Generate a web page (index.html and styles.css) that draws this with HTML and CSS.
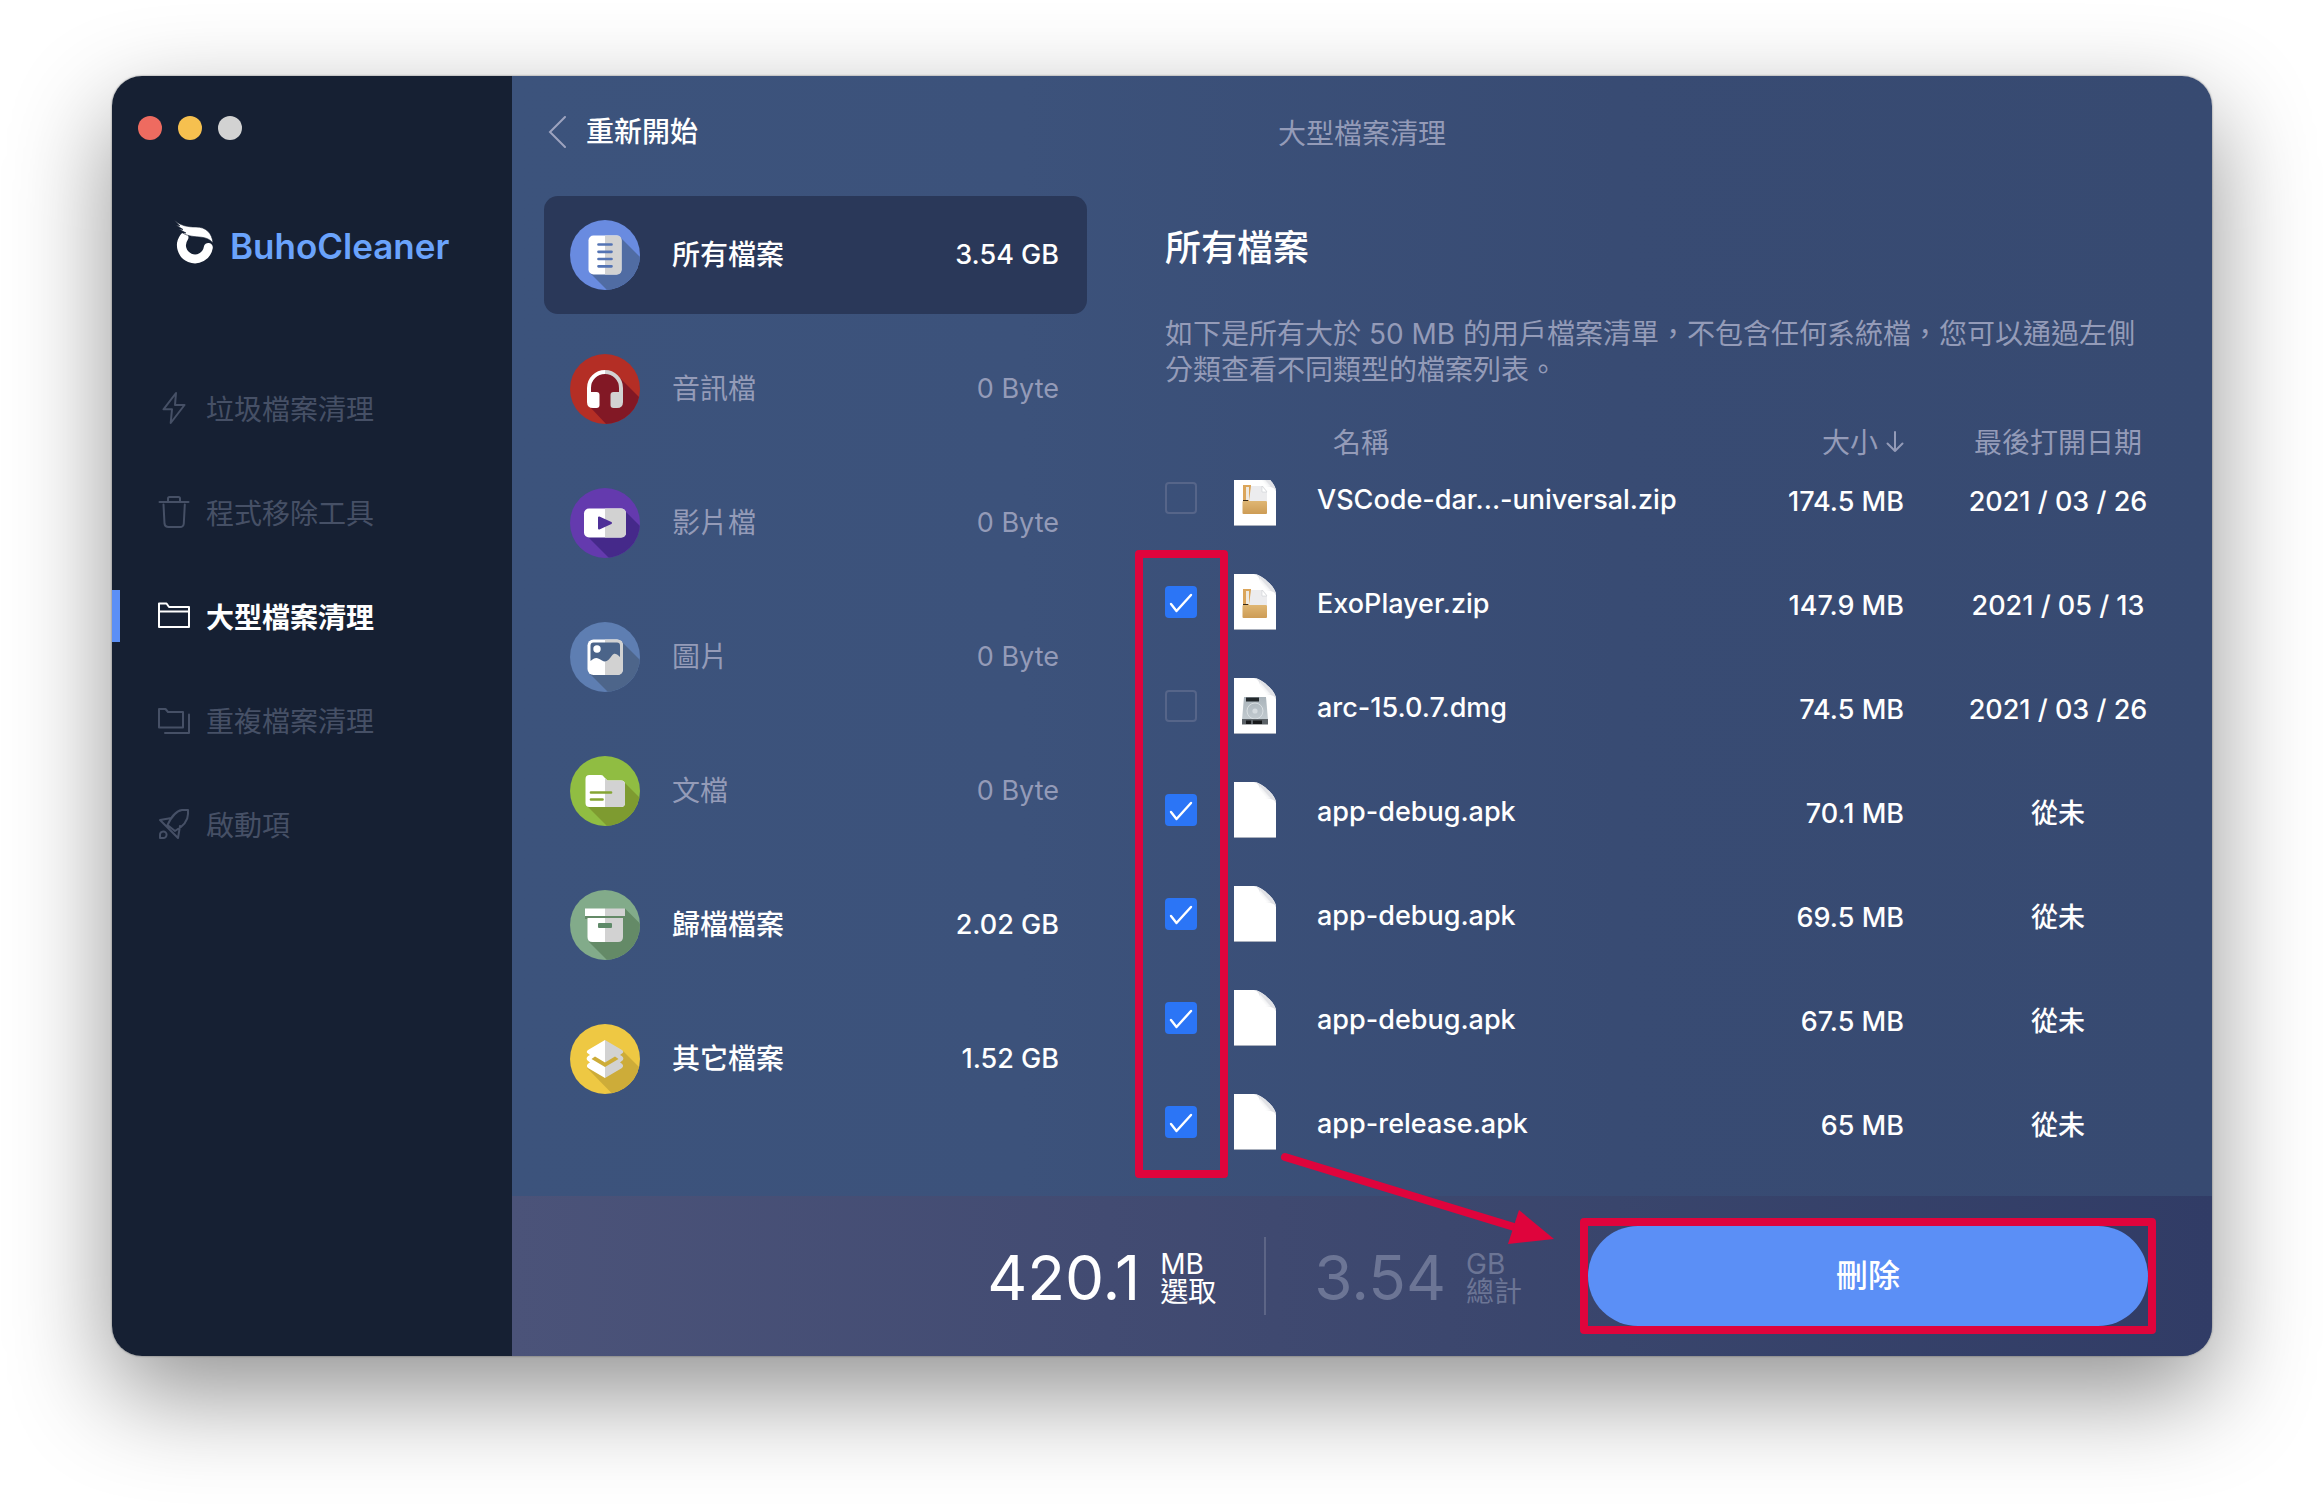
FILE: index.html
```html
<!DOCTYPE html>
<html lang="zh-Hant">
<head>
  <meta charset="UTF-8" />
  <meta name="viewport" content="width=device-width, initial-scale=1.0"/>
  <title>BuhoCleaner - 大型檔案清理</title>
  <link rel="stylesheet" href="styles.css">
</head>
<body>

  <!-- File icons shared by the table rows -->
  <svg class="defs" width="0" height="0" aria-hidden="true">
    <defs>
      <linearGradient id="fold" x1="0" y1="1" x2="1" y2="0">
        <stop offset="0.3" stop-color="#fff"/>
        <stop offset="1" stop-color="#c9ccd2"/>
      </linearGradient>
      <linearGradient id="kraft" x1="0" y1="0" x2="0" y2="1">
        <stop offset="0" stop-color="#dfb673"/>
        <stop offset="1" stop-color="#cd9c55"/>
      </linearGradient>
      <linearGradient id="metal" x1="0" y1="0" x2="0" y2="1">
        <stop offset="0" stop-color="#a9b3ba"/>
        <stop offset="1" stop-color="#c3cbd0"/>
      </linearGradient>
      <clipPath id="disc"><circle cx="35" cy="35" r="35"/></clipPath>
      <symbol id="page" viewBox="0 0 42 56">
        <path d="M0 0H20C27 0 42 13 42 21V56H0Z" fill="#fff"/>
        <path d="M20 0C27 0 42 13 42 21C40 17 36 16 26.500 16C27 8 26 2 20 0Z" fill="#e1e2e6"/>
        <path d="M26 4V16.500H37Z" fill="url(#fold)"/>
        <path d="M0 55.500H42" stroke="#aab0bd"/>
      </symbol>
      <symbol id="zip" viewBox="0 0 42 56">
        <use href="#page"/>
        <path d="M9 15H17V31H9Z" fill="#dba55a"/>
        <path d="M12 17H15V30H12Z" fill="#efe9df"/>
        <path d="M17 16H29L33 21V31H15Z" fill="#ececee"/>
        <path d="M28 16V22H33Z" fill="#fff" stroke="#cfd0d4" stroke-width="0.600"/>
        <path d="M9 30H14V31.500H9Z" fill="#3a2b18"/>
        <rect x="8.500" y="31" width="24.500" height="13" rx="1" fill="url(#kraft)"/>
      </symbol>
      <symbol id="dmg" viewBox="0 0 42 56">
        <use href="#page"/>
        <path d="M10 19H32L34 42H8Z" fill="url(#metal)"/>
        <rect x="12" y="19.500" width="13" height="4" fill="#23282c"/>
        <circle cx="21" cy="33" r="8" fill="none" stroke="#dfe4e7" stroke-width="0.800"/>
        <circle cx="21" cy="33" r="2.600" fill="#d5dbdf"/>
        <path d="M8 41H34V46.500H8Z" fill="#5c6267"/>
        <path d="M12 42.500H17V46H12ZM19 42.500H28V46H19Z" fill="#17191b"/>
      </symbol>
    </defs>
  </svg>

  <div class="window">
    <aside class="sidebar">
      <div class="lights">
        <span class="light red"></span>
        <span class="light yellow"></span>
        <span class="light gray"></span>
      </div>

      <div class="brand">
        <svg class="brand-mark" viewBox="0 0 40 44" aria-hidden="true">
          <path d="M10 17.500A13.500 13.500 0 1 0 34.300 27.500" fill="none" stroke="#fff" stroke-width="9" stroke-linecap="round"/>
          <path d="M0 0C7 6 14 7 22 7C32 7 38 13 39 23C35 18.500 31 17.500 25 17C18 16.500 12 15.500 9 13L12 13L5 9L9 9.500L2 5L6 6Z" fill="#fff" stroke="#162033" stroke-width="0.600"/>
        </svg>
        <span class="brand-name">BuhoCleaner</span>
      </div>

      <nav class="menu">
        <a href="#junk" class="menu-item">
          <svg class="menu-icon" viewBox="0 0 32 32"><path d="M18 1L5.500 17.300H14L12.700 31L26.500 13H17Z"/></svg>
          <span class="menu-text">垃圾檔案清理</span>
        </a>
        <a href="#uninstall" class="menu-item">
          <svg class="menu-icon" viewBox="0 0 32 32"><path d="M1.500 6H30.500M10 6V2.500Q10 1 11.500 1H20.500Q22 1 22 2.500V6M5.500 8.500L6.500 27.500Q7 31 10.500 31H22Q25.500 31 25.800 27.500L26.800 8.500"/></svg>
          <span class="menu-text">程式移除工具</span>
        </a>
        <a href="#large" class="menu-item active">
          <svg class="menu-icon" viewBox="0 0 32 32"><path d="M1 27V3.500H8.500L11 7H31V27ZM1 11.500H31"/></svg>
          <span class="menu-text">大型檔案清理</span>
        </a>
        <a href="#duplicate" class="menu-item">
          <svg class="menu-icon" viewBox="0 0 32 32"><path d="M1 23.500V5H7.500L10 8H25V23.500ZM31 10.500V29H7"/></svg>
          <span class="menu-text">重複檔案清理</span>
        </a>
        <a href="#startup" class="menu-item">
          <svg class="menu-icon" viewBox="0 0 32 32"><path d="M30 2H24C17 3 13 10 9.500 17L17 23C24 19 30 13 30 6ZM13.500 10L2 12L20 30L22 18M2 30V27A3.300 3.300 0 1 1 5 30Z"/></svg>
          <span class="menu-text">啟動項</span>
        </a>
      </nav>
    </aside>

    <main class="main">
      <header class="topbar">
        <a href="#restart" class="back">
          <svg class="back-icon" viewBox="0 0 18 32"><path d="M17 1L2 16L17 31"/></svg>
          重新開始
        </a>
        <h1 class="title">大型檔案清理</h1>
      </header>

      <div class="content">
        <div class="categories">
          <button type="button" class="category selected">
            <svg class="category-icon" viewBox="0 0 70 70">
              <g clip-path="url(#disc)">
                <rect width="70" height="70" fill="#698be0"/>
                <path d="M50 17L90 57V90H57L20 53Z" fill="#506ca3"/>
              </g>
              <rect x="18.500" y="15.500" width="33" height="39" rx="5" fill="#fff"/>
              <path d="M35 15.500H46.500Q51.500 15.500 51.500 20.500V49.500Q51.500 54.500 46.500 54.500H35Z" fill="#d2d2d2"/>
              <path d="M28.500 24.500H41.500M28.500 31.800H41.500M28.500 39H41.500M28.500 46.300H41.500" stroke="#5474b4" stroke-width="2.700" stroke-linecap="round"/>
            </svg>
            <span class="category-name">所有檔案</span>
            <span class="category-size">3.54 GB</span>
          </button>

          <button type="button" class="category empty">
            <svg class="category-icon" viewBox="0 0 70 70">
              <g clip-path="url(#disc)">
                <rect width="70" height="70" fill="#b42e25"/>
                <path d="M48 22L90 64V90H55L20 53V35Q22 18 35 18Z" fill="#821825"/>
              </g>
              <path d="M19 40V34A16 16 0 0 1 35 18" fill="none" stroke="#fff" stroke-width="4"/>
              <path d="M35 18A16 16 0 0 1 51 34V40" fill="none" stroke="#d2d2d2" stroke-width="4"/>
              <path d="M17 38H26.500Q29.500 38 29.500 41V51Q29.500 54 26.500 54H23Q17 54 17 48Z" fill="#fff"/>
              <path d="M53 38H43.500Q40.500 38 40.500 41V51Q40.500 54 43.500 54H47Q53 54 53 48Z" fill="#d2d2d2"/>
            </svg>
            <span class="category-name">音訊檔</span>
            <span class="category-size">0 Byte</span>
          </button>

          <button type="button" class="category empty">
            <svg class="category-icon" viewBox="0 0 70 70">
              <g clip-path="url(#disc)">
                <rect width="70" height="70" fill="#643aae"/>
                <path d="M54 22L90 58V90H59L17 48Z" fill="#45298a"/>
              </g>
              <rect x="14" y="20.500" width="42" height="29" rx="5" fill="#fff"/>
              <path d="M35 20.500H51Q56 20.500 56 25.500V44.500Q56 49.500 51 49.500H35Z" fill="#d2d2d2"/>
              <path d="M29 29.500V40.500L41 35Z" fill="#4e2f98" stroke="#4e2f98" stroke-width="2" stroke-linejoin="round"/>
            </svg>
            <span class="category-name">影片檔</span>
            <span class="category-size">0 Byte</span>
          </button>

          <button type="button" class="category empty">
            <svg class="category-icon" viewBox="0 0 70 70">
              <g clip-path="url(#disc)">
                <rect width="70" height="70" fill="#5e7eb2"/>
                <path d="M52 20L90 58V90H58L20 52Z" fill="#4d658a"/>
              </g>
              <rect x="17.500" y="17.500" width="35.500" height="35.500" rx="6" fill="#fff"/>
              <path d="M35 17.500H47Q53 17.500 53 23.500V47Q53 53 47 53H35Z" fill="#d2d2d2"/>
              <path d="M20.500 39V23.500Q20.500 20.500 23.500 20.500H47Q50 20.500 50 23.500V35C46 31 44 31 42 33.500C39 38 36 41 32 38.500C27 35 25 35 20.500 39Z" fill="#4b6489"/>
              <circle cx="27" cy="27" r="3.700" fill="#fff"/>
            </svg>
            <span class="category-name">圖片</span>
            <span class="category-size">0 Byte</span>
          </button>

          <button type="button" class="category empty">
            <svg class="category-icon" viewBox="0 0 70 70">
              <g clip-path="url(#disc)">
                <rect width="70" height="70" fill="#90bd42"/>
                <path d="M54 26L90 62V90H57L17 50Z" fill="#7e9b30"/>
              </g>
              <path d="M15.500 23Q15.500 19 19.500 19H31Q33 19 34 21L37.500 24.500H51Q55 24.500 55 28.500V47Q55 51 51 51H19.500Q15.500 51 15.500 47Z" fill="#fff"/>
              <path d="M35 22L37.500 24.500H51Q55 24.500 55 28.500V47Q55 51 51 51H35Z" fill="#d2d2d2"/>
              <path d="M21 36.500H41M21 43.500H32.500" stroke="#85a534" stroke-width="2.700" stroke-linecap="round"/>
            </svg>
            <span class="category-name">文檔</span>
            <span class="category-size">0 Byte</span>
          </button>

          <button type="button" class="category">
            <svg class="category-icon" viewBox="0 0 70 70">
              <g clip-path="url(#disc)">
                <rect width="70" height="70" fill="#82ab8a"/>
                <path d="M55 18.500L90 53.500V90H57L19 52Z" fill="#648a67"/>
              </g>
              <path d="M15 26H55V29H15Z" fill="#648a67"/>
              <path d="M15 18.500H35V26H15ZM17.500 28H35V52H22.500Q17.500 52 17.500 47Z" fill="#fff"/>
              <path d="M35 18.500H55V26H35ZM35 28H53V47Q53 52 48 52H35Z" fill="#d2d2d2"/>
              <rect x="28" y="33" width="14" height="5" rx="1" fill="#5f8a69"/>
            </svg>
            <span class="category-name">歸檔檔案</span>
            <span class="category-size">2.02 GB</span>
          </button>

          <button type="button" class="category">
            <svg class="category-icon" viewBox="0 0 70 70">
              <g clip-path="url(#disc)">
                <rect width="70" height="70" fill="#eec843"/>
                <path d="M53 27L90 64V90H62L17 44Z" fill="#cdac39"/>
              </g>
              <path d="M35 16L18 26Q15.500 28 18 29.500L20 31Q15.500 33 17 36L20 38.500Q15 41 18 44L35 54Z" fill="#fff"/>
              <path d="M35 16L52 26Q54.500 28 52 29.500L50 31Q54.500 33 53 36L50 38.500Q55 41 52 44L35 54Z" fill="#d2d2d2"/>
              <path d="M21.500 35L25 32.500L35 38.500L45 32.500L48.500 35L35 43Z" fill="#cdac39"/>
            </svg>
            <span class="category-name">其它檔案</span>
            <span class="category-size">1.52 GB</span>
          </button>
        </div>

        <section class="files">
          <h2 class="files-title">所有檔案</h2>
          <p class="files-desc">如下是所有大於 50 MB 的用戶檔案清單，不包含任何系統檔，您可以通過左側分類查看不同類型的檔案列表。</p>

          <div class="table-wrap">
            <table class="table">
              <thead>
                <tr>
                  <th></th>
                  <th></th>
                  <th class="col-name">名稱</th>
                  <th class="col-size">大小
                    <svg class="sort-icon" viewBox="0 0 18 22"><path d="M9 1V20M1.500 12.500L9 20L16.500 12.500"/></svg>
                  </th>
                  <th class="col-date">最後打開日期</th>
                </tr>
              </thead>
              <tbody>
                <tr>
                  <td><input type="checkbox" class="check" aria-label="VSCode-dar...-universal.zip"></td>
                  <td><svg class="file-icon"><use href="#zip"/></svg></td>
                  <td class="col-name">VSCode-dar...-universal.zip</td>
                  <td class="col-size">174.5 MB</td>
                  <td class="col-date">2021 / 03 / 26</td>
                </tr>
                <tr>
                  <td><input type="checkbox" class="check" aria-label="ExoPlayer.zip" checked></td>
                  <td><svg class="file-icon"><use href="#zip"/></svg></td>
                  <td class="col-name">ExoPlayer.zip</td>
                  <td class="col-size">147.9 MB</td>
                  <td class="col-date">2021 / 05 / 13</td>
                </tr>
                <tr>
                  <td><input type="checkbox" class="check" aria-label="arc-15.0.7.dmg"></td>
                  <td><svg class="file-icon"><use href="#dmg"/></svg></td>
                  <td class="col-name">arc-15.0.7.dmg</td>
                  <td class="col-size">74.5 MB</td>
                  <td class="col-date">2021 / 03 / 26</td>
                </tr>
                <tr>
                  <td><input type="checkbox" class="check" aria-label="app-debug.apk" checked></td>
                  <td><svg class="file-icon"><use href="#page"/></svg></td>
                  <td class="col-name">app-debug.apk</td>
                  <td class="col-size">70.1 MB</td>
                  <td class="col-date">從未</td>
                </tr>
                <tr>
                  <td><input type="checkbox" class="check" aria-label="app-debug.apk" checked></td>
                  <td><svg class="file-icon"><use href="#page"/></svg></td>
                  <td class="col-name">app-debug.apk</td>
                  <td class="col-size">69.5 MB</td>
                  <td class="col-date">從未</td>
                </tr>
                <tr>
                  <td><input type="checkbox" class="check" aria-label="app-debug.apk" checked></td>
                  <td><svg class="file-icon"><use href="#page"/></svg></td>
                  <td class="col-name">app-debug.apk</td>
                  <td class="col-size">67.5 MB</td>
                  <td class="col-date">從未</td>
                </tr>
                <tr>
                  <td><input type="checkbox" class="check" aria-label="app-release.apk" checked></td>
                  <td><svg class="file-icon"><use href="#page"/></svg></td>
                  <td class="col-name">app-release.apk</td>
                  <td class="col-size">65 MB</td>
                  <td class="col-date">從未</td>
                </tr>
              </tbody>
            </table>
            <div class="mark-checks"></div>
          </div>
        </section>
      </div>

      <footer class="footer">
        <div class="stat">
          <span class="stat-number">420.1</span>
          <span class="stat-unit">MB<br>選取</span>
        </div>
        <div class="stat total">
          <span class="stat-number">3.54</span>
          <span class="stat-unit">GB<br>總計</span>
        </div>
        <div class="action">
          <button type="button" class="delete">刪除</button>
          <svg class="mark-arrow" viewBox="0 0 280 100" aria-hidden="true">
            <path d="M7 7L236 77" stroke="#df043c" stroke-width="8" stroke-linecap="round"/>
            <path d="M241 60L276 89L230 94Z" fill="#df043c"/>
          </svg>
        </div>
      </footer>
    </main>
  </div>

</body>
</html>
```

FILE: styles.css
```css
* {
  box-sizing: border-box;
}

body {
  margin: 0;
  padding: 76px 112px 148px;
  background: #fff;
  color: #fff;
  font-family: Inter, "Noto Sans CJK TC", sans-serif;
  font-size: 28px;
  line-height: 36px;
}

a {
  color: inherit;
  text-decoration: none;
}

button {
  border: none;
  color: inherit;
  font: inherit;
  cursor: pointer;
}

.defs {
  position: absolute;
}

.window {
  display: flex;
  min-height: calc(100vh - 224px);
  border-radius: 30px;
  overflow: hidden;
  box-shadow: 0 0 2px rgba(0, 0, 0, 0.5), 0 38px 100px rgba(0, 0, 0, 0.43);
}

/* SIDEBAR */
.sidebar {
  flex: 0 0 400px;
  background: #162033;
}

.lights {
  display: flex;
  gap: 16px;
  padding: 40px 26px 0;
}

.light {
  width: 24px;
  height: 24px;
  border-radius: 50%;
}

.red {
  background: #ee6b60;
}

.yellow {
  background: #f6c04f;
}

.gray {
  background: #d2d2d2;
}

.brand {
  display: flex;
  align-items: center;
  gap: 16px;
  margin-top: 80px;
  padding-left: 62px;
}

.brand-mark {
  width: 40px;
  height: 44px;
}

.brand-name {
  padding-top: 8px;
  color: #6aa3fc;
  font-size: 35px;
  font-weight: 600;
}

.menu {
  margin-top: 92px;
}

.menu-item {
  display: flex;
  align-items: center;
  gap: 16px;
  height: 104px;
  padding-left: 46px;
  color: #465066;
}

.menu-icon {
  width: 32px;
  height: 32px;
  fill: none;
  stroke: currentColor;
  stroke-width: 2;
  stroke-linejoin: round;
  stroke-linecap: round;
}

.menu-text {
  padding-top: 4px;
}

.menu-item.active {
  color: #fff;
  font-weight: 700;
}

.menu-item.active::before {
  content: "";
  width: 8px;
  height: 52px;
  margin-left: -46px;
  margin-right: 22px;
  background: #5b8ff6;
}

/* MAIN */
.main {
  flex: 1;
  display: flex;
  flex-direction: column;
  min-width: 0;
  background: linear-gradient(90deg, #3c537c 0%, #3c527b 30%, #384b73 65%, #374a71 100%);
}

.topbar {
  display: grid;
  grid-template-columns: 1fr auto 1fr;
  align-items: center;
  height: 112px;
  margin-bottom: 8px;
  padding: 0 36px;
}

.back {
  display: flex;
  align-items: center;
  gap: 20px;
  font-weight: 500;
}

.back-icon {
  width: 18px;
  height: 32px;
  fill: none;
  stroke: #9da3bf;
  stroke-width: 2;
  stroke-linecap: round;
}

.title {
  margin: 0;
  padding-top: 4px;
  color: #949bb8;
  font-size: 28px;
  font-weight: 400;
}

.content {
  flex: 1;
  display: grid;
  grid-template-columns: 543px 1fr;
  gap: 78px;
  padding: 0 64px 22px 32px;
}

.categories {
  display: flex;
  flex-direction: column;
  gap: 16px;
}

.category {
  display: flex;
  align-items: center;
  height: 118px;
  padding: 0 28px 0 26px;
  border-radius: 14px;
  background: none;
  font-weight: 500;
}

.category.selected {
  background: #2a3859;
}

.category.empty {
  color: #949bb8;
  font-weight: 400;
}

.category-icon {
  width: 70px;
  height: 70px;
  margin-right: 32px;
}

.category-size {
  margin-left: auto;
  font-size: 27px;
}

/* FILE LIST */
.files-title {
  margin: 26px 0 42px;
  font-size: 36px;
  font-weight: 500;
  line-height: 52px;
}

.files-desc {
  margin: 0 0 18px;
  color: #949bb8;
}

.table-wrap {
  position: relative;
}

.table,
.table thead,
.table tbody {
  display: block;
}

.table tbody {
  overflow: hidden;
}

.table tr {
  display: grid;
  grid-template-columns: 69px 83px 1fr 180px 244px;
  align-items: center;
  height: 104px;
}

.table thead tr {
  height: 74px;
}

/* list is scrolled a little, so the first row is cut by the header */
.table tbody tr:first-child {
  margin-top: -34px;
}

.table th,
.table td {
  padding: 0;
  text-align: left;
  white-space: nowrap;
}

.table th {
  color: #949bb8;
  font-weight: 400;
}

.table td {
  font-size: 27px;
  font-weight: 500;
}

.table th.col-name {
  padding-left: 16px;
}

.table .col-size {
  text-align: right;
}

.table .col-date {
  padding-left: 64px;
  text-align: center;
}

.table td.col-name {
  padding-top: 4px;
}

.table td.col-size,
.table td.col-date {
  padding-top: 8px;
}

.sort-icon {
  width: 18px;
  height: 22px;
  fill: none;
  stroke: currentColor;
  stroke-width: 2;
  stroke-linecap: round;
  stroke-linejoin: round;
}

.check {
  display: block;
  appearance: none;
  width: 32px;
  height: 32px;
  margin: 0;
  border: 2px solid #566589;
  border-radius: 4px;
}

.check:checked {
  border: none;
  background: #2b75f6 url("data:image/svg+xml,%3Csvg xmlns='http://www.w3.org/2000/svg' viewBox='0 0 32 32'%3E%3Cpath d='M6 18L11.500 25L26 9' fill='none' stroke='white' stroke-width='2.400' stroke-linecap='round' stroke-linejoin='round'/%3E%3C/svg%3E");
}

.file-icon {
  display: block;
  width: 42px;
  height: 56px;
}

/* FOOTER */
.footer {
  display: flex;
  align-items: center;
  justify-content: flex-end;
  height: 160px;
  padding-right: 64px;
  background: linear-gradient(90deg, #4b5379, #424b72 35%, #39456c 65%, #313c66);
}

.stat {
  display: flex;
  align-items: center;
  height: 78px;
  padding-right: 48px;
}

.stat-number,
.stat-unit {
  padding-top: 4px;
}

.stat-number {
  margin-right: 20px;
  font-size: 62px;
  line-height: 78px;
}

.stat-unit {
  line-height: 28px;
}

.stat.total {
  padding: 0 66px 0 48px;
  border-left: 2px solid #5d6586;
  color: #6c7595;
}

.action {
  position: relative;
}

.delete {
  display: block;
  width: 560px;
  height: 100px;
  border-radius: 50px;
  background: #5b8ff6;
  font-size: 32px;
  font-weight: 500;
}

/* RED MARKS */
.mark-checks {
  position: absolute;
  top: 144px;
  left: -30px;
  width: 93px;
  height: 628px;
  border: 8px solid #df043c;
  border-radius: 4px;
}

.action::after {
  content: "";
  position: absolute;
  inset: -8px;
  border: 8px solid #df043c;
  border-radius: 4px;
  pointer-events: none;
}

.mark-arrow {
  position: absolute;
  top: -76px;
  left: -310px;
  width: 280px;
  height: 100px;
  pointer-events: none;
}
```
